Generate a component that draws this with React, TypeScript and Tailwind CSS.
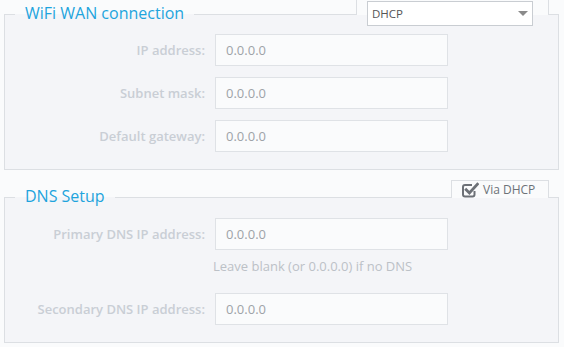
import React from "react";

function Field({ label }: { label: string }) {
  return (
    <>
      <label className="text-right text-[13px] font-semibold text-[#c9ced5] leading-[32px] whitespace-nowrap">
        {label}
      </label>
      <input
        readOnly
        defaultValue="0.0.0.0"
        className="h-[32px] w-[233px] border border-[#dfe2e6] bg-[#fafbfc] px-[10px] text-[13px] text-[#9ea3a8] outline-none font-['Open_Sans']"
      />
    </>
  );
}

function CheckSquare() {
  return (
    <svg width="17" height="16" viewBox="0 0 17 16" fill="none">
      <path
        d="M12.5 9 V12.5 A2 2 0 0 1 10.5 14.5 H3 A2 2 0 0 1 1 12.5 V5 A2 2 0 0 1 3 3 H10"
        stroke="#6d7177"
        strokeWidth="2"
      />
      <path d="M4.2 7.8 L7.4 11 L15.4 2.2" stroke="#6d7177" strokeWidth="2.8" strokeLinecap="square" />
    </svg>
  );
}

export default function App() {
  return (
    <div className="w-[564px] h-[347px] overflow-hidden bg-[#fafbfc] font-['Open_Sans',sans-serif]">
      {/* WAN */}
      <div className="relative ml-[4px] w-[555px] pt-[2px]">
        <fieldset className="border border-[#dcdfe3] bg-[#f4f5f8] pt-[8px] pb-[17px]">
          <legend className="ml-[10px] px-[10px] pb-[2px] text-[16px] leading-[22px] text-[#1ea4dd]">
            WiFi WAN connection
          </legend>
          <div className="grid grid-cols-[200px_233px] gap-x-[10px] gap-y-[11px] items-center">
            <Field label="IP address:" />
            <Field label="Subnet mask:" />
            <Field label="Default gateway:" />
          </div>
        </fieldset>
        <div className="absolute left-[352px] top-0 h-[15px] w-[193px] border-x border-[#dcdfe3] bg-[#fafbfc]">
          <div className="ml-[10px] mt-[1px] flex h-[25px] w-[166px] items-center justify-between border border-[#c9cdd2] bg-white pl-[4px] pr-[4px]">
            <span className="text-[11.5px] text-[#555] leading-none">DHCP</span>
            <svg width="10" height="5" viewBox="0 0 10 5">
              <path d="M0 0 H10 L5 5 Z" fill="#8a8a8a" />
            </svg>
          </div>
        </div>
      </div>

      {/* DNS */}
      <div className="relative ml-[4px] w-[555px] pt-[15px]">
        <fieldset className="border border-[#dcdfe3] bg-[#f4f5f8] pt-[9px] pb-[17px]">
          <legend className="ml-[10px] px-[10px] pb-[2px] text-[16px] leading-[22px] text-[#1ea4dd]">
            DNS Setup
          </legend>
          <div className="grid grid-cols-[200px_233px] gap-x-[10px] items-center">
            <Field label="Primary DNS IP address:" />
            <div />
            <div className="mt-[7px] mb-[18px] -ml-[2px] text-[13px] leading-[18px] text-[#bcc1c7] whitespace-nowrap">
              Leave blank (or 0.0.0.0) if no DNS
            </div>
            <Field label="Secondary DNS IP address:" />
          </div>
        </fieldset>
        <div className="absolute left-[447px] top-[10px] flex h-[18px] w-[98px] items-center gap-[4px] border-x border-t border-[#dcdfe3] bg-[#fafbfc] pl-[10px]">
          <CheckSquare />
          <span className="text-[12px] leading-none text-[#6d7278]">Via DHCP</span>
        </div>
      </div>
    </div>
  );
}
